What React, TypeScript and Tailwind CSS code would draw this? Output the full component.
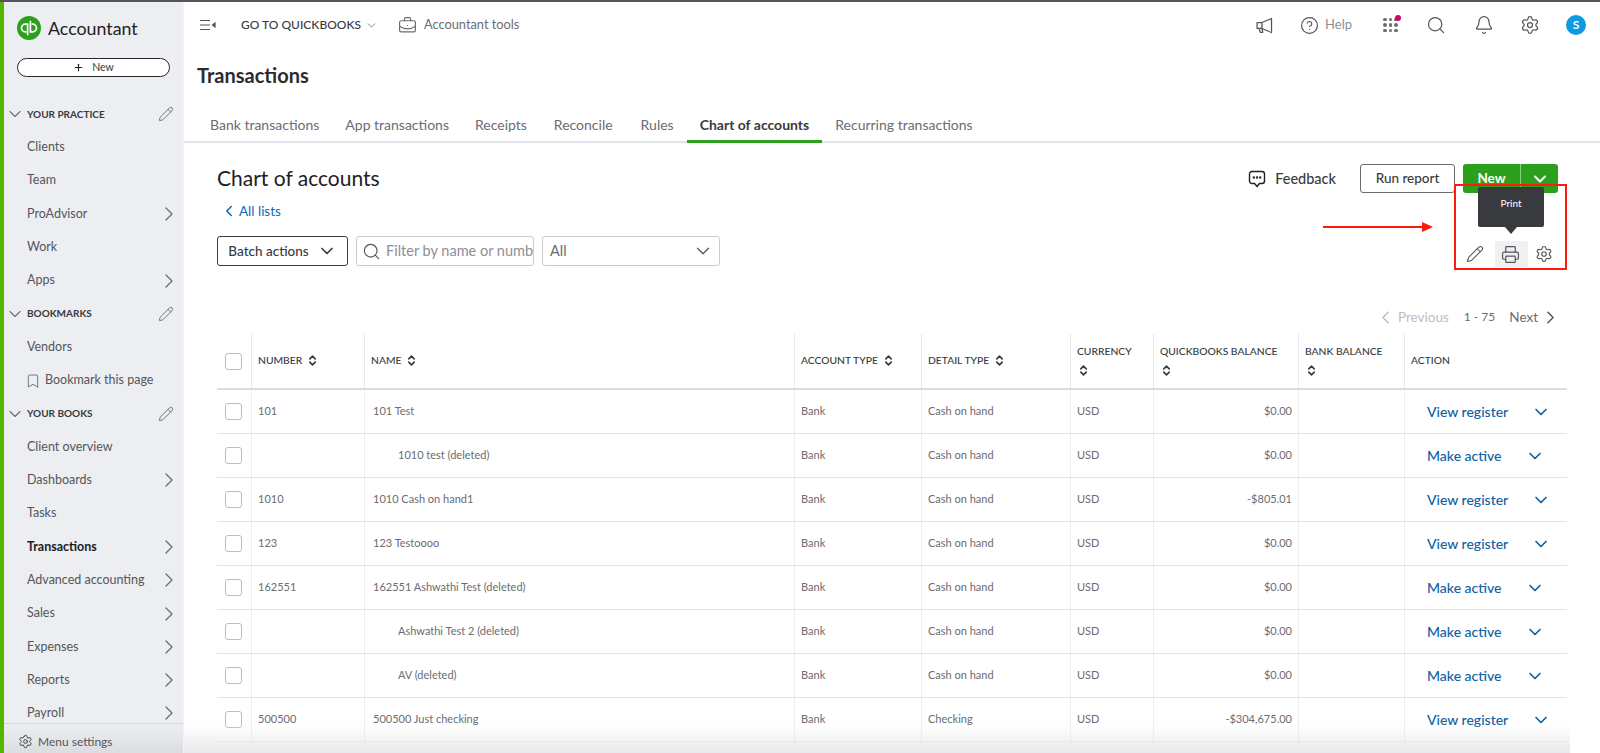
import { Fragment } from 'react';
import {
  ChevronDown,
  ChevronLeft,
  ChevronRight,
  ChevronsUpDown,
  CircleHelp,
  Bell,
  Bookmark,
  BriefcaseBusiness,
  Pencil,
  Plus,
  Printer,
  Search,
  Settings,
} from 'lucide-react';

const font = 'font-["Lato","Noto_Sans",sans-serif]';

type NavItem = { label: string; arrow?: boolean; active?: boolean; bookmark?: boolean };
type NavSection = { title: string; items: NavItem[] };

const nav: NavSection[] = [
  {
    title: 'YOUR PRACTICE',
    items: [
      { label: 'Clients' },
      { label: 'Team' },
      { label: 'ProAdvisor', arrow: true },
      { label: 'Work' },
      { label: 'Apps', arrow: true },
    ],
  },
  {
    title: 'BOOKMARKS',
    items: [{ label: 'Vendors' }, { label: 'Bookmark this page', bookmark: true }],
  },
  {
    title: 'YOUR BOOKS',
    items: [
      { label: 'Client overview' },
      { label: 'Dashboards', arrow: true },
      { label: 'Tasks' },
      { label: 'Transactions', arrow: true, active: true },
      { label: 'Advanced accounting', arrow: true },
      { label: 'Sales', arrow: true },
      { label: 'Expenses', arrow: true },
      { label: 'Reports', arrow: true },
      { label: 'Payroll', arrow: true },
    ],
  },
];

const tabs = [
  { label: 'Bank transactions', cls: '' },
  { label: 'App transactions', cls: '' },
  { label: 'Receipts', cls: '' },
  { label: 'Reconcile', cls: 'ml-[1px]' },
  { label: 'Rules', cls: 'ml-[2px]' },
  { label: 'Chart of accounts', cls: 'font-bold text-[#393a3d] border-b-[3px] border-[#2ca01c]' },
  { label: 'Recurring transactions', cls: '' },
];

const rows = [
  { num: '101', name: '101 Test', detail: 'Cash on hand', bal: '$0.00', action: 'View register' },
  { name: '1010 test (deleted)', sub: true, detail: 'Cash on hand', bal: '$0.00', action: 'Make active' },
  { num: '1010', name: '1010 Cash on hand1', detail: 'Cash on hand', bal: '-$805.01', action: 'View register' },
  { num: '123', name: '123 Testoooo', detail: 'Cash on hand', bal: '$0.00', action: 'View register' },
  { num: '162551', name: '162551 Ashwathi Test (deleted)', detail: 'Cash on hand', bal: '$0.00', action: 'Make active' },
  { name: 'Ashwathi Test 2 (deleted)', sub: true, detail: 'Cash on hand', bal: '$0.00', action: 'Make active' },
  { name: 'AV (deleted)', sub: true, detail: 'Cash on hand', bal: '$0.00', action: 'Make active' },
  { num: '500500', name: '500500 Just checking', detail: 'Checking', bal: '-$304,675.00', action: 'View register' },
];

const cols = 'grid-cols-[34px_113px_430px_127px_149px_83px_145px_106px_163px]';

function Sort() {
  return <ChevronsUpDown className="inline-block w-[13px] h-[13px] text-[#393a3d]" strokeWidth={3} />;
}

function Head({ label, stack, sort = true }: { label: string; stack?: boolean; sort?: boolean }) {
  return (
    <div className="border-l border-[#e8e9ec] px-[6px] flex items-center text-[10.3px] text-[#393a3d] font-medium">
      {stack ? (
        <div className="leading-[18px] -mt-[2px]">
          <div className="whitespace-nowrap">{label}</div>
          <Sort />
        </div>
      ) : (
        <div className="flex items-center gap-[4px] whitespace-nowrap -mt-[1px]">
          {label}
          {sort && <Sort />}
        </div>
      )}
    </div>
  );
}

function Cell({ children, className = '' }: { children?: React.ReactNode; className?: string }) {
  return (
    <div className={`border-l border-dotted border-[#dcdde0] px-[6px] flex items-center text-[11px] text-[#6b6c72] ${className}`}>
      {children}
    </div>
  );
}

function Checkbox() {
  return <span className="block w-[17px] h-[17px] rounded-[3px] border border-[#babec5] bg-white" />;
}

function QbLogo() {
  return (
    <svg viewBox="0 0 24 24" className="w-[24px] h-[24px] shrink-0" fill="none" stroke="#fff" strokeWidth="1.7">
      <circle cx="12" cy="12" r="12" fill="#2ca01c" stroke="none" />
      <path d="M10.6 19.2V8.2H8.3a3.8 3.8 0 0 0 0 7.6h1" />
      <path d="M13.4 4.8v11h2.3a3.8 3.8 0 0 0 0-7.6h-1" />
    </svg>
  );
}

function Sidebar() {
  return (
    <aside className="w-[183px] h-full shrink-0 bg-[#eceef1] border-l-[4px] border-[#53b700] flex flex-col relative">
      <div className="h-[36px] mt-[8px] flex items-center pl-[13px] gap-[7px]">
        <QbLogo />
        <span className="text-[17.8px] text-[#1f2024]">Accountant</span>
      </div>
      <button className="mt-[12px] ml-[13px] w-[153px] h-[19px] rounded-full border-[1.5px] border-[#26272b] bg-white flex items-center justify-center gap-[8px] text-[10.5px] text-[#393a3d]">
        <Plus className="w-[11px] h-[11px] text-[#1f2024]" strokeWidth={2.5} />
        New
      </button>
      <div className="mt-[20.5px] flex-1 overflow-hidden">
        {nav.map((sec) => (
          <Fragment key={sec.title}>
            <div className="h-[33.3px] flex items-center pl-[1px] pr-[9px]">
              <ChevronDown className="w-[20px] h-[20px] text-[#6b6c72] shrink-0" strokeWidth={1.3} />
              <span className="ml-[2px] flex-1 text-[10px] font-bold text-[#393a3d]">{sec.title}</span>
              <Pencil className="w-[16px] h-[16px] text-[#6b6c72]" strokeWidth={1.4} />
            </div>
            {sec.items.map((item) => (
              <div
                key={item.label}
                className={`h-[33.3px] flex items-center pl-[23px] pr-[2px] relative text-[12.5px] ${
                  item.active ? 'font-bold text-[#1f2024]' : 'text-[#55565b]'
                }`}
              >
                {item.active && <span className="absolute -left-[4px] top-0 bottom-0 w-[4px] bg-[#236c0e]" />}
                {item.bookmark && <Bookmark className="w-[16px] h-[16px] mr-[4px] -ml-[2px] text-[#6b6c72]" strokeWidth={1.4} />}
                <span className="flex-1 whitespace-nowrap">{item.label}</span>
                {item.arrow && <ChevronRight className="w-[24px] h-[24px] text-[#6b6c72]" strokeWidth={1.3} />}
              </div>
            ))}
          </Fragment>
        ))}
      </div>
      <div className="absolute left-0 right-0 bottom-0 h-[30px] pt-[6px] border-t border-[#d4d7dc] bg-gradient-to-b from-[#eceef1] to-[#dcdde1] flex items-center pl-[14px] gap-[5px] text-[12px] text-[#55565b]">
        <Settings className="w-[15px] h-[15px] text-[#393a3d]" strokeWidth={1.5} />
        Menu settings
      </div>
    </aside>
  );
}

function TopBar() {
  return (
    <div className="h-[46px] flex items-center pl-[16px] pr-[14px] text-[#6b6c72]">
      <svg viewBox="0 0 16 12" className="w-[16px] h-[12px] text-[#55565b]" fill="none" stroke="currentColor" strokeWidth="1.2">
        <path d="M0 1.5h10M0 6h10M0 10.5h10" />
        <path d="M15 4v4l-2.5-2z" fill="currentColor" />
      </svg>
      <span className="ml-[25px] text-[12px] font-medium text-[#393a3d]">GO TO QUICKBOOKS</span>
      <ChevronDown className="ml-[4px] w-[13px] h-[13px]" strokeWidth={1.5} />
      <BriefcaseBusiness className="ml-[20px] w-[19px] h-[19px]" strokeWidth={1.5} />
      <span className="ml-[7px] text-[12.8px]">Accountant tools</span>
      <div className="ml-auto flex items-center text-[#55565b]">
        <svg viewBox="0 0 16 16" className="w-[17px] h-[17px]" fill="none" stroke="currentColor" strokeWidth="1.2" strokeLinejoin="round">
          <path d="M1 5.2h4.6L14.6 1.4v13.2L5.6 10.8H1z" />
          <path d="M5.6 5.2v5.6M3 10.8l1 3.6h2.4l-.8-3.6" />
        </svg>
        <CircleHelp className="ml-[27px] w-[19px] h-[19px]" strokeWidth={1.5} />
        <span className="ml-[6px] text-[13px] text-[#8d9096]">Help</span>
        <div className="ml-[31px] w-[15px] grid grid-cols-3 gap-[2px] relative">
          {Array.from({ length: 9 }).map((_, i) => (
            <span key={i} className="w-[3.5px] h-[3.5px] rounded-full bg-[#6b6c72]" />
          ))}
          <span className="absolute -top-[3px] -right-[3px] w-[6px] h-[6px] rounded-full bg-[#d6006e]" />
        </div>
        <Search className="ml-[28px] w-[20px] h-[20px]" strokeWidth={1.5} />
        <Bell className="ml-[28px] w-[20px] h-[20px]" strokeWidth={1.5} />
        <Settings className="ml-[26px] w-[20px] h-[20px]" strokeWidth={1.5} />
        <span className="ml-[26px] w-[20px] h-[20px] rounded-full bg-[#0d9ae0] text-white text-[12px] font-bold flex items-center justify-center">S</span>
      </div>
    </div>
  );
}

function Toolbar() {
  return (
    <div className="flex h-[135px] items-start relative">
      <div>
        <h1 className="text-[21px] leading-[26px] text-[#1f2024]">Chart of accounts</h1>
        <div className="mt-[10px] ml-[3px] flex items-center text-[13.5px] text-[#0b6bb3]">
          <ChevronLeft className="w-[18px] h-[18px] mr-[1px]" strokeWidth={2} />
          All lists
        </div>
        <div className="mt-[15px] flex items-center text-[14.5px]">
          <button className="w-[131px] h-[30px] rounded-[3px] border border-[#393a3d] flex items-center justify-center gap-[8px] text-[13.5px] text-[#393a3d] font-medium">
            Batch actions
            <ChevronDown className="w-[20px] h-[20px]" strokeWidth={2} />
          </button>
          <div className="ml-[8px] w-[178px] h-[30px] rounded-[3px] border border-[#c9cbd0] flex items-center pl-[5px] gap-[5px] text-[#8d9096] overflow-hidden">
            <Search className="w-[19px] h-[19px] shrink-0 text-[#55565b]" strokeWidth={1.5} />
            <span className="whitespace-nowrap overflow-hidden">Filter by name or numb</span>
          </div>
          <div className="ml-[8px] w-[178px] h-[30px] rounded-[3px] border border-[#c9cbd0] flex items-center justify-between pl-[7px] pr-[5px] text-[#6b6c72]">
            All
            <ChevronDown className="w-[22px] h-[22px] text-[#55565b]" strokeWidth={1.4} />
          </div>
        </div>
      </div>
      <div className="ml-auto mt-[-1px] mr-[9px] flex items-center text-[13.5px]">
        <svg viewBox="0 0 18 18" className="w-[18px] h-[18px] text-[#1f2024]" fill="none" stroke="currentColor" strokeWidth="1.4" strokeLinejoin="round">
          <path d="M4 1.5h10a2.5 2.5 0 0 1 2.5 2.5v7a2.5 2.5 0 0 1-2.5 2.5h-2.6L9 16.5l-2.4-3H4A2.5 2.5 0 0 1 1.5 11V4A2.5 2.5 0 0 1 4 1.5z" />
          <circle cx="5.8" cy="7.5" r="0.5" />
          <circle cx="9" cy="7.5" r="0.5" />
          <circle cx="12.2" cy="7.5" r="0.5" />
        </svg>
        <span className="ml-[9px] text-[14.5px] text-[#393a3d] font-medium">Feedback</span>
        <button className="ml-[24px] w-[95px] h-[29px] rounded-[3px] border border-[#6b6c72] text-[#393a3d] font-medium">Run report</button>
        <div className="ml-[8px] w-[95px] h-[29px] rounded-[3px] bg-[#2ca01c] flex text-white font-bold">
          <span className="w-[58px] flex items-center justify-center border-r border-[#8ccf80]">New</span>
          <span className="flex-1 flex items-center justify-center">
            <ChevronDown className="w-[20px] h-[20px]" strokeWidth={2.5} />
          </span>
        </div>
      </div>
    </div>
  );
}

function TableTools() {
  return (
    <>
      {/* red annotation painted over the page */}
      <div className="absolute left-[1270px] top-[182px] w-[113px] h-[86px] border-2 border-[#ff1a0d] z-20" />
      <div className="absolute left-[1139px] top-[224px] w-[102px] h-[2px] bg-[#ff1a0d]" />
      <div className="absolute left-[1238px] top-[220px] w-0 h-0 border-y-[5px] border-y-transparent border-l-[11px] border-l-[#ff1a0d]" />
      {/* tooltip */}
      <div className="absolute left-[1294px] top-[185px] w-[66px] h-[40px] rounded-[2px] bg-[#393a3d] text-white text-[10px] flex items-center justify-center pb-[7px] z-10">
        Print
      </div>
      <div className="absolute left-[1321px] top-[225px] w-0 h-0 border-x-[6px] border-x-transparent border-t-[7px] border-t-[#393a3d]" />
      <Pencil className="absolute left-[1282px] top-[243px] w-[18px] h-[18px] text-[#55565b]" strokeWidth={1.4} />
      <div className="absolute left-[1311px] top-[239px] w-[33px] h-[26px] rounded-[2px] bg-[#eef0f2] flex items-center justify-center">
        <Printer className="w-[19px] h-[19px] -translate-x-[1px] text-[#55565b]" strokeWidth={1.5} />
      </div>
      <Settings className="absolute left-[1351px] top-[243px] w-[18px] h-[18px] text-[#55565b]" strokeWidth={1.5} />
    </>
  );
}

function Table() {
  return (
    <div className="text-[#393a3d]">
      <div className="h-[34px] flex items-center justify-end pr-[6px] text-[13.5px] text-[#6b6c72]">
        <ChevronLeft className="w-[21px] h-[21px] text-[#babec5]" strokeWidth={1.7} />
        <span className="ml-[2px] text-[#babec5]">Previous</span>
        <span className="ml-[15px] text-[12px]">1 - 75</span>
        <span className="ml-[14px]">Next</span>
        <ChevronRight className="ml-[2px] w-[21px] h-[21px] text-[#55565b]" strokeWidth={1.7} />
      </div>
      <div className={`grid ${cols} h-[56px] border-b-2 border-[#dcdde2]`}>
        <div className="flex items-center pl-[8px]">
          <Checkbox />
        </div>
        <Head label="NUMBER" />
        <Head label="NAME" />
        <Head label="ACCOUNT TYPE" />
        <Head label="DETAIL TYPE" />
        <Head label="CURRENCY" stack />
        <Head label="QUICKBOOKS BALANCE" stack />
        <Head label="BANK BALANCE" stack />
        <Head label="ACTION" sort={false} />
      </div>
      {rows.map((r, i) => (
        <div key={i} className={`grid ${cols} h-[44px] border-b border-[#e3e4e7]`}>
          <div className="flex items-center pl-[8px]">
            <Checkbox />
          </div>
          <Cell>{r.num}</Cell>
          <Cell className={r.sub ? 'pl-[33px]' : 'pl-[8px]'}>{r.name}</Cell>
          <Cell>Bank</Cell>
          <Cell>{r.detail}</Cell>
          <Cell>USD</Cell>
          <Cell className="justify-end">{r.bal}</Cell>
          <Cell />
          <Cell className="pl-[22px] gap-[23px] text-[14px] font-medium !text-[#0b62a4]">
            {r.action}
            <ChevronDown className="w-[20px] h-[20px]" strokeWidth={2} />
          </Cell>
        </div>
      ))}
      <div className={`grid ${cols} h-[44px]`}>
        <div className="flex items-center pl-[8px]">
          <Checkbox />
        </div>
        <Cell />
        <Cell />
        <Cell />
        <Cell />
        <Cell />
        <Cell />
        <Cell />
        <Cell />
      </div>
    </div>
  );
}

export default function App() {
  return (
    <div className={`w-[1600px] h-[753px] overflow-hidden flex bg-white border-t-2 border-[#55565b] ${font}`}>
      <Sidebar />
      <main className="flex-1 min-w-0 relative border-l border-[#f2f3f5]">
        <TopBar />
        <div className="pl-[13px] text-[20px] font-bold text-[#2a2b2e] leading-[24px] mt-[15px]">Transactions</div>
        <div className="mt-[25px] h-[31px] flex items-start border-b-2 border-[#e3e5e8] pl-[13px] text-[14px] text-[#6b6c72]">
          {tabs.map((t) => (
            <div key={t.label} className={`px-[13px] h-[31px] leading-[26px] ${t.cls}`}>
              {t.label}
            </div>
          ))}
        </div>
        <div className="pl-[33px] pr-[33px] pt-[22px]">
          <Toolbar />
          <Table />
        </div>
        <TableTools />
        <div className="absolute left-0 right-[30px] bottom-0 h-[28px] bg-gradient-to-b from-transparent to-[#e8e9eb] pointer-events-none" />
      </main>
    </div>
  );
}
